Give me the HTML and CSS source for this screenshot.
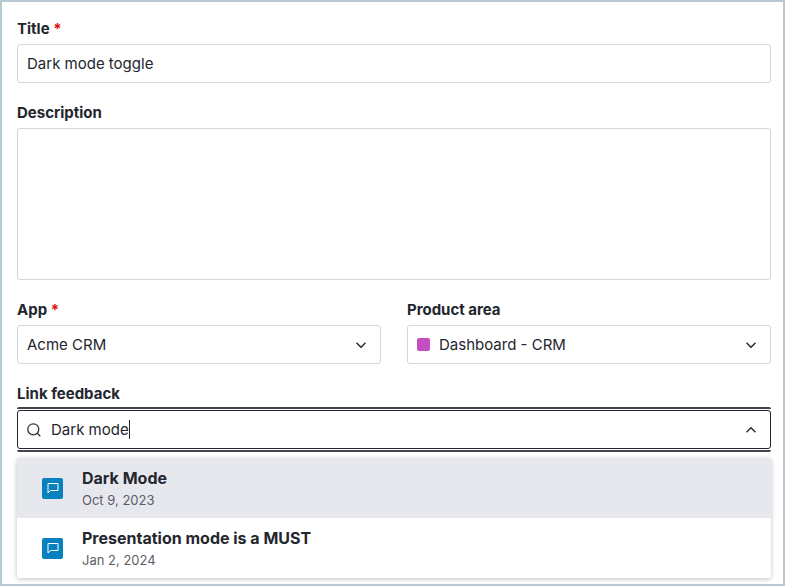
FILE: index.html
```html
<!DOCTYPE html>
<html lang="en">
<head>
    <meta charset="UTF-8">
    <meta name="viewport" content="width=device-width, initial-scale=1.0">
    <title>New idea</title>
    <link rel="stylesheet" href="styles.css">
</head>
<body>
    <form class="idea-form">
        <div class="field">
            <label for="title">Title <span class="required">*</span></label>
            <input type="text" id="title" class="control" value="Dark mode toggle" required>
        </div>

        <div class="field">
            <label for="description">Description</label>
            <textarea id="description" class="control description"></textarea>
        </div>

        <div class="field-row">
            <div class="field">
                <label for="app">App <span class="required">*</span></label>
                <div class="control select-box">
                    <select id="app" required>
                        <option>Acme CRM</option>
                    </select>
                    <svg class="chevron" viewBox="0 0 12 12"><path d="M1.5 3.8 6 8.2l4.5-4.4"/></svg>
                </div>
            </div>
            <div class="field">
                <label for="area">Product area</label>
                <div class="control select-box">
                    <span class="swatch"></span>
                    <select id="area">
                        <option>Dashboard - CRM</option>
                    </select>
                    <svg class="chevron" viewBox="0 0 12 12"><path d="M1.5 3.8 6 8.2l4.5-4.4"/></svg>
                </div>
            </div>
        </div>

        <!-- Feedback search -->
        <div class="field search-field">
            <label for="feedback">Link feedback</label>
            <div class="focus-ring">
                <div class="control search-box">
                    <svg class="search-icon" viewBox="0 0 14 14"><circle cx="6.3" cy="6.3" r="5.5"/><path d="M10.3 10.3l3 3"/></svg>
                    <input type="text" id="feedback" value="Dark mode">
                    <span class="caret"></span>
                    <svg class="chevron" viewBox="0 0 12 12"><path d="M1.5 8.2 6 3.8l4.5 4.4"/></svg>
                </div>
            </div>
            <ul class="results">
                <li class="result active">
                    <span class="result-icon">
                        <svg viewBox="0 0 12 12"><path d="M1 11V1.5h10v7H3.5z"/></svg>
                    </span>
                    <div>
                        <div class="result-title">Dark Mode</div>
                        <div class="result-date">Oct 9, 2023</div>
                    </div>
                </li>
                <li class="result">
                    <span class="result-icon">
                        <svg viewBox="0 0 12 12"><path d="M1 11V1.5h10v7H3.5z"/></svg>
                    </span>
                    <div>
                        <div class="result-title">Presentation mode is a MUST</div>
                        <div class="result-date">Jan 2, 2024</div>
                    </div>
                </li>
            </ul>
        </div>
    </form>
</body>
</html>
```

FILE: styles.css
```css
* {
    box-sizing: border-box;
}

body {
    margin: 0;
    font-family: Inter, sans-serif;
    font-size: 15px;
    color: #24262e;
    background-color: #fff;
}

.idea-form {
    display: flex;
    flex-direction: column;
    gap: 20px;
    min-height: 100vh;
    padding: 17px 12px 6px 15px;
    border: 2px solid #b9c9d3;
}

.field {
    display: flex;
    flex-direction: column;
    gap: 5px;
    min-width: 0;
}

.field label {
    font-weight: 700;
    line-height: 20px;
}

.required {
    color: #dd1111;
}

.control {
    width: 100%;
    height: 39px;
    padding: 0 9px;
    border: 1px solid #d5d5e1;
    border-radius: 3px;
    background-color: #fff;
    font: inherit;
    color: inherit;
    outline: none;
}

.description {
    display: block;
    height: 152px;
    padding: 9px;
    resize: none;
}

.field-row {
    display: grid;
    grid-template-columns: 1fr 1fr;
    gap: 26px;
}

.select-box {
    display: flex;
    align-items: center;
    padding-right: 13px;
}

.select-box select {
    flex: 1;
    min-width: 0;
    height: 100%;
    padding: 0;
    border: none;
    background: none;
    font: inherit;
    color: inherit;
    appearance: none;
    outline: none;
}

.swatch {
    width: 13px;
    height: 13px;
    margin-right: 9px;
    border-radius: 2px;
    background-color: #c44fc0;
}

.chevron {
    width: 12px;
    height: 12px;
    fill: none;
    stroke: #24262e;
    stroke-width: 1.4;
}

/* Feedback search */
.search-field {
    gap: 3px;
}

.focus-ring {
    padding: 1px 0;
    border-top: 2px solid #43434d;
    border-bottom: 2px solid #43434d;
    border-radius: 2px;
}

.search-box {
    display: flex;
    align-items: center;
    padding-right: 13px;
    border-color: #24262e;
}

.search-icon {
    width: 14px;
    height: 14px;
    margin-right: 10px;
    fill: none;
    stroke: #33353d;
    stroke-width: 1.3;
}

.search-box input {
    field-sizing: content;
    padding: 0;
    border: none;
    background: none;
    font: inherit;
    color: inherit;
    outline: none;
}

.caret {
    width: 1px;
    height: 19px;
    background-color: #24262e;
}

.search-box .chevron {
    margin-left: auto;
}

.results {
    margin: 3px 0 0;
    padding: 0;
    list-style: none;
    border-radius: 3px;
    background-color: #fff;
    box-shadow: 0 1px 5px rgba(0, 0, 0, 0.25);
    overflow: hidden;
}

.result {
    display: flex;
    align-items: center;
    gap: 19px;
    height: 60px;
    padding: 0 25px;
}

.result.active {
    background-color: #e7e8ee;
}

.result-icon {
    display: flex;
    align-items: center;
    justify-content: center;
    width: 21px;
    height: 21px;
    border-radius: 2px;
    background-color: #0781bd;
}

.result-icon svg {
    width: 12px;
    height: 12px;
    fill: none;
    stroke: #fff;
    stroke-width: 1;
}

.result-title {
    font-size: 16px;
    font-weight: 700;
    line-height: 24px;
}

.result-date {
    font-size: 13px;
    line-height: 20px;
    color: #5b5d66;
}
```
